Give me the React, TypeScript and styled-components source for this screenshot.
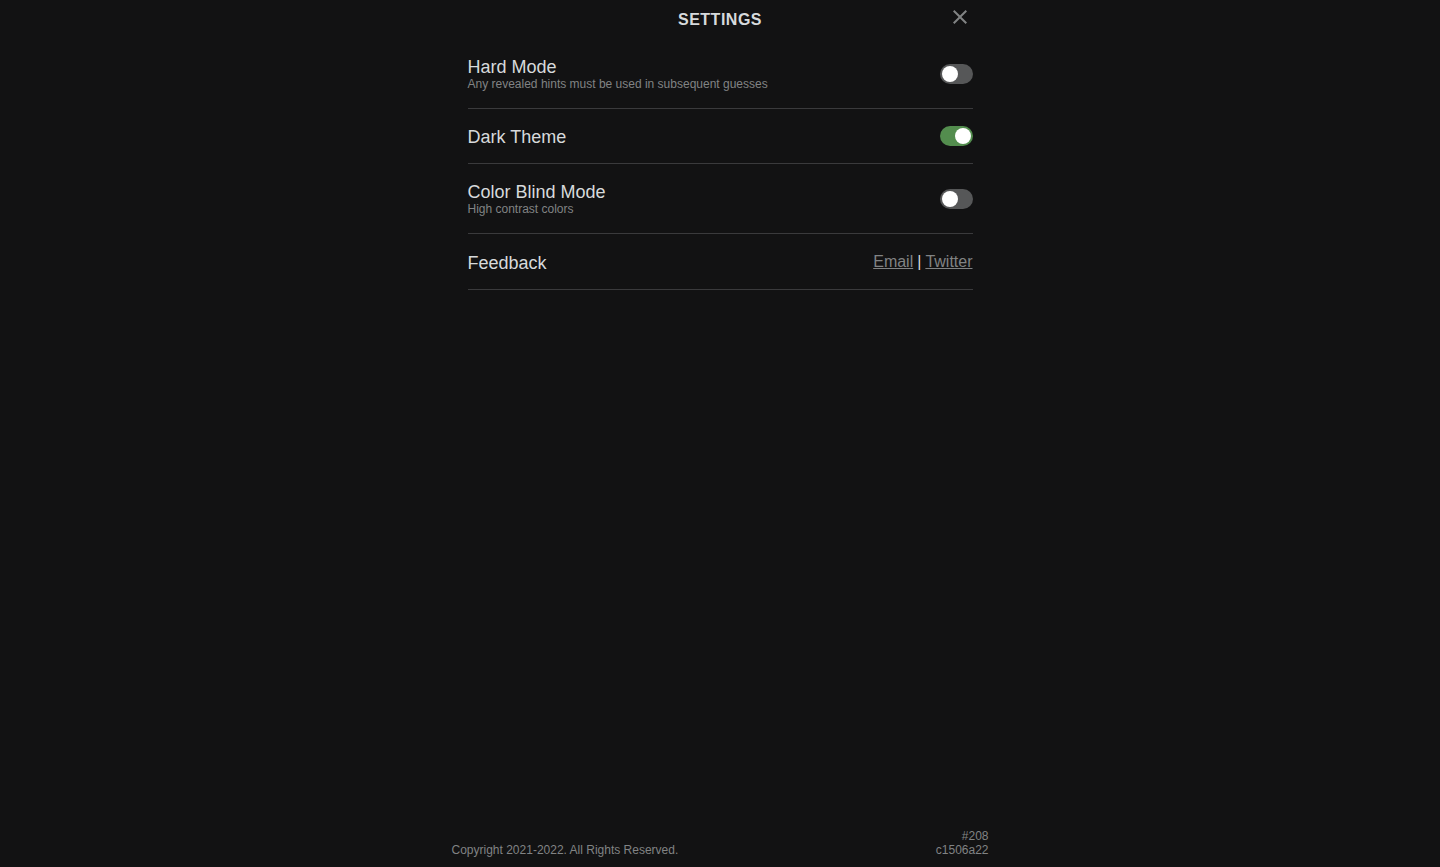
import React, { useState } from "react";
import styled, { createGlobalStyle } from "styled-components";

const GlobalStyle = createGlobalStyle`
  html, body {
    margin: 0;
    padding: 0;
    background: #121213;
    font-family: "Liberation Sans", Arial, sans-serif;
    color: #d7dadc;
  }
`;

type SettingType = {
  key: string;
  title: string;
  description?: string;
  on: boolean;
};

const initialSettings: Array<SettingType> = [
  {
    key: "hard",
    title: "Hard Mode",
    description: "Any revealed hints must be used in subsequent guesses",
    on: false,
  },
  { key: "dark", title: "Dark Theme", on: true },
  {
    key: "colorblind",
    title: "Color Blind Mode",
    description: "High contrast colors",
    on: false,
  },
];

const App = () => {
  const [settings, setSettings] = useState(initialSettings);

  const onToggle = (idx: number) => {
    setSettings((prev) =>
      prev.map((el, i) => (i === idx ? { ...el, on: !el.on } : el))
    );
  };

  return (
    <>
      <GlobalStyle />
      <Page>
        <Content>
          <Header>
            <Title>Settings</Title>
            <CloseButton aria-label="close">
              <svg width="24" height="24" viewBox="0 0 24 24">
                <path
                  fill="#818384"
                  d="M19 6.41 17.59 5 12 10.59 6.41 5 5 6.41 10.59 12 5 17.59 6.41 19 12 13.41 17.59 19 19 17.59 13.41 12z"
                />
              </svg>
            </CloseButton>
          </Header>
          <Sections>
            {settings.map((el, i) => (
              <Setting key={el.key}>
                <Text>
                  <SettingTitle>{el.title}</SettingTitle>
                  {el.description && (
                    <SettingDescription>{el.description}</SettingDescription>
                  )}
                </Text>
                <Switch $on={el.on} onClick={() => onToggle(i)}>
                  <Knob $on={el.on} />
                </Switch>
              </Setting>
            ))}
            <Setting>
              <Text>
                <SettingTitle>Feedback</SettingTitle>
              </Text>
              <Links>
                <LinkText href="#">Email</LinkText>
                <Pipe>|</Pipe>
                <LinkText href="#">Twitter</LinkText>
              </Links>
            </Setting>
          </Sections>
        </Content>
        <Footer>
          <Copyright>Copyright 2021-2022. All Rights Reserved.</Copyright>
          <Version>
            <div>#208</div>
            <div>c1506a22</div>
          </Version>
        </Footer>
      </Page>
    </>
  );
};

export default App;

const Page = styled.div`
  box-sizing: border-box;
  width: 537px;
  height: 100vh;
  margin: 0 auto;
  display: flex;
  flex-direction: column;
`;

const Content = styled.div`
  flex: 1;
  padding: 0 16px;
`;

const Header = styled.div`
  position: relative;
  height: 39px;
  display: flex;
  align-items: center;
  justify-content: center;
`;

const Title = styled.h1`
  margin: 1px 0 0;
  font-size: 16px;
  font-weight: 700;
  letter-spacing: 0.5px;
  text-transform: uppercase;
  color: #d7dadc;
`;

const CloseButton = styled.button`
  position: absolute;
  right: 1px;
  top: 5px;
  padding: 0;
  border: none;
  background: none;
  width: 24px;
  height: 24px;
  cursor: pointer;
`;

const Sections = styled.div`
  display: flex;
  flex-direction: column;
`;

const Setting = styled.div`
  display: flex;
  align-items: center;
  justify-content: space-between;
  padding: 16px 0;
  border-bottom: 1px solid #3a3a3c;
`;

const Text = styled.div`
  display: flex;
  flex-direction: column;
`;

const SettingTitle = styled.div`
  font-size: 18px;
  line-height: 22px;
  padding-top: 1px;
  margin-bottom: -1px;
  color: #d7dadc;
`;

const SettingDescription = styled.div`
  font-size: 12px;
  line-height: 15px;
  color: #818384;
`;

const Switch = styled.div<{ $on: boolean }>`
  box-sizing: border-box;
  width: 33px;
  height: 20px;
  padding: 2px;
  border-radius: 999px;
  background: ${(p) => (p.$on ? "#538d4e" : "#565758")};
  display: flex;
  justify-content: ${(p) => (p.$on ? "flex-end" : "flex-start")};
  cursor: pointer;
`;

const Knob = styled.span<{ $on: boolean }>`
  width: 16px;
  height: 16px;
  border-radius: 50%;
  background: #ffffff;
`;

const Links = styled.div`
  display: flex;
  align-items: center;
  gap: 4px;
  font-size: 16px;
  line-height: 23px;
`;

const LinkText = styled.a`
  color: #818384;
  text-decoration: underline;
`;

const Pipe = styled.span`
  color: #d7dadc;
`;

const Footer = styled.div`
  display: flex;
  justify-content: space-between;
  align-items: flex-end;
  padding-bottom: 10px;
  font-size: 12px;
  line-height: 14px;
  color: #818384;
`;

const Copyright = styled.div``;

const Version = styled.div`
  text-align: right;
`;
